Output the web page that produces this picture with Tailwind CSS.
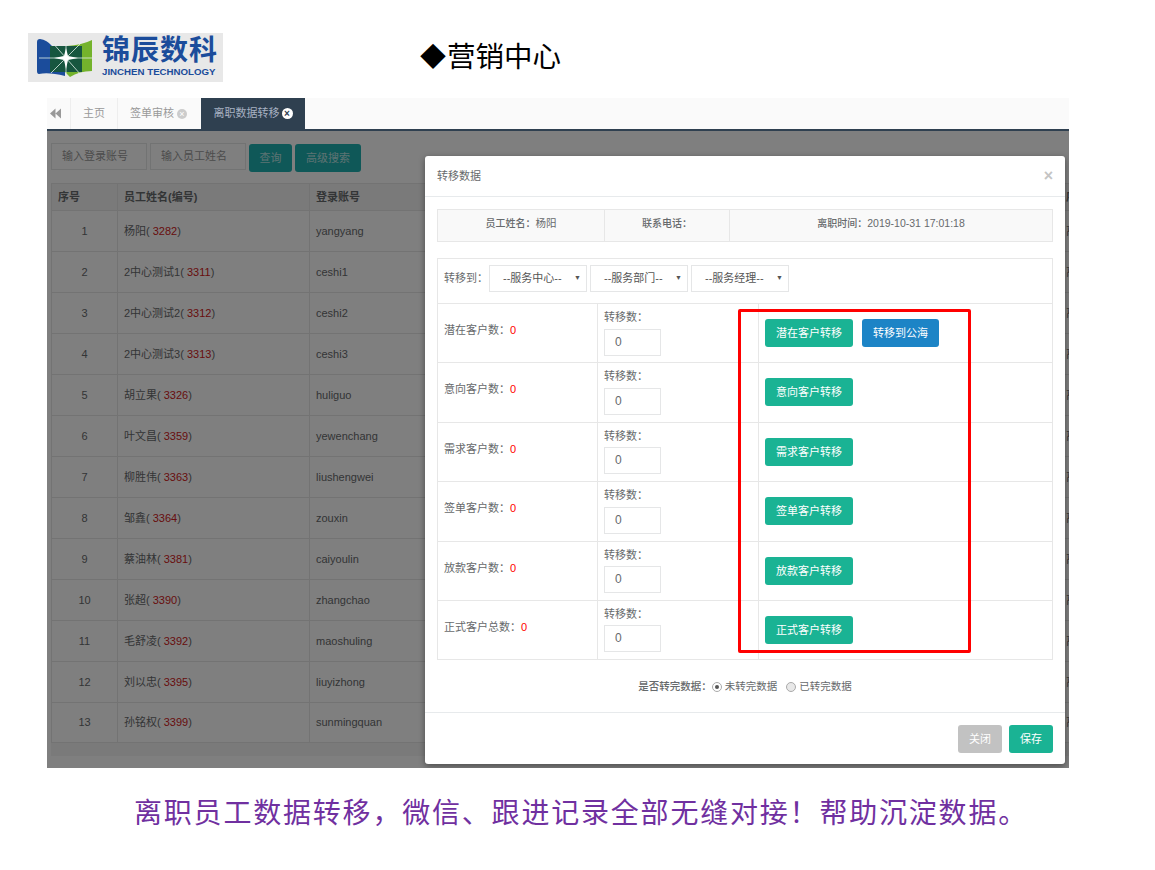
<!DOCTYPE html>
<html lang="zh-CN">
<head>
    <meta charset="UTF-8">
    <title>营销中心</title>
    <script src="https://cdn.jsdelivr.net/npm/@tailwindcss/browser@4"></script>
</head>
<body class="bg-white w-[1155px] h-[870px] overflow-hidden font-['Liberation_Sans','Noto_Sans_CJK_SC',sans-serif] text-[11px] text-[#676a6c]">
    <!-- Slide header -->
    <div class="flex h-[98px] pt-[33px] pl-[28px]">
        <div class="flex items-center w-[195px] h-[49px] bg-[#e8e8e8] pl-[9px]">
            <svg class="w-[55px] h-[38px] shrink-0" viewBox="0 0 55 38">
                <path d="M30 7 Q45 6 55 1 Q56 20 55 32 Q42 32 33 38 L28 33 Z" fill="#74b32c"/>
                <path d="M0 3 Q0 0 3 0 Q10 1 15 7 V32 H28 V37 Q12 33 2 35 Q0 35 0 32 Z" fill="#1b4c9b"/>
                <rect x="13" y="7" width="32" height="26" fill="#17563f"/>
                <path d="M14 2 L44 36 M44 4 L14 34 M29 3 V36 M2 19 H55" stroke="#dfeee6" stroke-width="0.8"/>
                <path d="M29 9 L31 17 L41 19 L31 21 L29 30 L27 21 L17 19 L27 17 Z" fill="#fff"/>
            </svg>
            <div class="ml-[10px] text-[#1b4c9b] font-bold">
                <div class="text-[28px] leading-[30px] tracking-[1px] -mt-[3px]">锦辰数科</div>
                <div class="text-[9.7px] leading-[11px] font-['Liberation_Sans',sans-serif]">JINCHEN TECHNOLOGY</div>
            </div>
        </div>
        <div class="ml-[197px] h-[48px] flex items-center text-[28.5px] text-black"><span class="w-[27px] text-[26px]">◆</span>营销中心</div>
    </div>

    <!-- App screenshot -->
    <div class="relative ml-[47px] w-[1022px] h-[670px] overflow-hidden bg-white">
        <!-- Tabs -->
        <div class="relative z-20 flex h-[33px] bg-[#fafafa] border-b-2 border-[#2f4050]">
            <div class="w-[23px] flex items-center pl-[3px]">
                <svg class="w-[11px] h-[11px]" viewBox="0 0 10 10" fill="#999"><path d="M5 0.5 V9.5 L0 5 Z M10 0.5 V9.5 L5 5 Z"/></svg>
            </div>
            <div class="w-[47px] flex items-center justify-center border-l border-[#eee] text-[#999]">主页</div>
            <div class="w-[84px] flex items-center justify-center gap-[3px] border-l border-[#eee] text-[#999] pr-[2px]">签单审核<span class="w-[10px] h-[10px] rounded-full bg-[#ccc] text-white text-[9px] leading-[10px] text-center">×</span></div>
            <div class="w-[104px] flex items-center justify-center gap-[2px] bg-[#2f4050] text-[#a7b1c2]">离职数据转移<span class="w-[11px] h-[11px] rounded-full bg-white text-[#2f4050] text-[10px] leading-[11px] text-center font-bold">×</span></div>
        </div>

        <!-- Page behind the dialog -->
        <div class="px-[4px] pt-[12px]">
            <div class="flex gap-[3px] h-[40px]">
                <div class="w-[96px] h-[27px] border border-[#e5e6e7] pl-[10px] leading-[25px] text-[#999]">输入登录账号</div>
                <div class="w-[96px] h-[27px] border border-[#e5e6e7] pl-[10px] leading-[25px] text-[#999]">输入员工姓名</div>
                <div class="w-[43px] h-[28px] mt-[1px] rounded-[3px] bg-[#1fb0b0] text-white/70 text-center leading-[28px]">查询</div>
                <div class="w-[66px] h-[28px] mt-[1px] rounded-[3px] bg-[#1fb0b0] text-white/70 text-center leading-[28px]">高级搜索</div>
            </div>
            <table class="w-[1100px] table-fixed border-collapse">
                <thead>
                    <tr class="h-[27px] bg-[#f5f5f5] font-bold text-left">
                        <th class="w-[66px] border border-[#e7e7e7] pl-[6px]">序号</th>
                        <th class="w-[192px] border border-[#e7e7e7] pl-[6px]">员工姓名(编号)</th>
                        <th class="w-[750px] border border-[#e7e7e7] pl-[6px]">登录账号</th>
                        <th class="border border-[#e7e7e7] pl-[6px]">序</th>
                    </tr>
                </thead>
                <tbody>
                    <tr class="h-[41px]"><td class="border border-[#e7e7e7] text-center">1</td><td class="border border-[#e7e7e7] pl-[6px]">杨阳( <span class="text-[#d02020]">3282</span>)</td><td class="border border-[#e7e7e7] pl-[6px]">yangyang</td><td class="border border-[#e7e7e7] pl-[6px]">离</td></tr>
                    <tr class="h-[41px]"><td class="border border-[#e7e7e7] text-center">2</td><td class="border border-[#e7e7e7] pl-[6px]">2中心测试1( <span class="text-[#d02020]">3311</span>)</td><td class="border border-[#e7e7e7] pl-[6px]">ceshi1</td><td class="border border-[#e7e7e7] pl-[6px]">离</td></tr>
                    <tr class="h-[41px]"><td class="border border-[#e7e7e7] text-center">3</td><td class="border border-[#e7e7e7] pl-[6px]">2中心测试2( <span class="text-[#d02020]">3312</span>)</td><td class="border border-[#e7e7e7] pl-[6px]">ceshi2</td><td class="border border-[#e7e7e7] pl-[6px]">离</td></tr>
                    <tr class="h-[41px]"><td class="border border-[#e7e7e7] text-center">4</td><td class="border border-[#e7e7e7] pl-[6px]">2中心测试3( <span class="text-[#d02020]">3313</span>)</td><td class="border border-[#e7e7e7] pl-[6px]">ceshi3</td><td class="border border-[#e7e7e7] pl-[6px]">离</td></tr>
                    <tr class="h-[41px]"><td class="border border-[#e7e7e7] text-center">5</td><td class="border border-[#e7e7e7] pl-[6px]">胡立果( <span class="text-[#d02020]">3326</span>)</td><td class="border border-[#e7e7e7] pl-[6px]">huliguo</td><td class="border border-[#e7e7e7] pl-[6px]">离</td></tr>
                    <tr class="h-[41px]"><td class="border border-[#e7e7e7] text-center">6</td><td class="border border-[#e7e7e7] pl-[6px]">叶文昌( <span class="text-[#d02020]">3359</span>)</td><td class="border border-[#e7e7e7] pl-[6px]">yewenchang</td><td class="border border-[#e7e7e7] pl-[6px]">离</td></tr>
                    <tr class="h-[41px]"><td class="border border-[#e7e7e7] text-center">7</td><td class="border border-[#e7e7e7] pl-[6px]">柳胜伟( <span class="text-[#d02020]">3363</span>)</td><td class="border border-[#e7e7e7] pl-[6px]">liushengwei</td><td class="border border-[#e7e7e7] pl-[6px]">离</td></tr>
                    <tr class="h-[41px]"><td class="border border-[#e7e7e7] text-center">8</td><td class="border border-[#e7e7e7] pl-[6px]">邹鑫( <span class="text-[#d02020]">3364</span>)</td><td class="border border-[#e7e7e7] pl-[6px]">zouxin</td><td class="border border-[#e7e7e7] pl-[6px]">离</td></tr>
                    <tr class="h-[41px]"><td class="border border-[#e7e7e7] text-center">9</td><td class="border border-[#e7e7e7] pl-[6px]">蔡油林( <span class="text-[#d02020]">3381</span>)</td><td class="border border-[#e7e7e7] pl-[6px]">caiyoulin</td><td class="border border-[#e7e7e7] pl-[6px]">离</td></tr>
                    <tr class="h-[41px]"><td class="border border-[#e7e7e7] text-center">10</td><td class="border border-[#e7e7e7] pl-[6px]">张超( <span class="text-[#d02020]">3390</span>)</td><td class="border border-[#e7e7e7] pl-[6px]">zhangchao</td><td class="border border-[#e7e7e7] pl-[6px]">离</td></tr>
                    <tr class="h-[41px]"><td class="border border-[#e7e7e7] text-center">11</td><td class="border border-[#e7e7e7] pl-[6px]">毛舒凌( <span class="text-[#d02020]">3392</span>)</td><td class="border border-[#e7e7e7] pl-[6px]">maoshuling</td><td class="border border-[#e7e7e7] pl-[6px]">离</td></tr>
                    <tr class="h-[41px]"><td class="border border-[#e7e7e7] text-center">12</td><td class="border border-[#e7e7e7] pl-[6px]">刘以忠( <span class="text-[#d02020]">3395</span>)</td><td class="border border-[#e7e7e7] pl-[6px]">liuyizhong</td><td class="border border-[#e7e7e7] pl-[6px]">离</td></tr>
                    <tr class="h-[40px]"><td class="border border-[#e7e7e7] text-center">13</td><td class="border border-[#e7e7e7] pl-[6px]">孙铭权( <span class="text-[#d02020]">3399</span>)</td><td class="border border-[#e7e7e7] pl-[6px]">sunmingquan</td><td class="border border-[#e7e7e7] pl-[6px]">离</td></tr>
                </tbody>
            </table>
            <div class="h-[13px] w-[1100px] bg-[#f5f5f5]"></div>
        </div>

        <!-- Backdrop -->
        <div class="absolute inset-0 z-10 bg-black/50"></div>

        <!-- Dialog -->
        <div class="absolute z-20 left-[378px] top-[58px] w-[640px] h-[608px] bg-white rounded-[3px] shadow-[0_2px_6px_rgba(0,0,0,0.4)] flex flex-col font-['Liberation_Sans','Noto_Sans_CJK_TC',sans-serif]">
            <div class="h-[41px] shrink-0 border-b border-[#e7eaec] flex items-center justify-between px-[12px]">
                <span>转移数据</span>
                <span class="text-[#c4c4c4] text-[16px] font-bold leading-none">×</span>
            </div>
            <div class="px-[12px] pt-[12px] flex-1">
                <div class="grid grid-cols-[167px_125px_1fr] h-[33px] bg-[#f9f9f9] border border-[#e7e7e7] text-center text-[10.5px] leading-[26px]">
                    <div class="border-r border-[#e7e7e7]"><b class="font-medium text-[10px]">员工姓名：</b>杨阳</div>
                    <div class="border-r border-[#e7e7e7]"><b class="font-medium text-[10px]">联系电话：</b></div>
                    <div><b class="font-medium text-[10px]">离职时间：</b>2019-10-31 17:01:18</div>
                </div>

                <div class="mt-[16px] border border-[#e7e7e7]">
                    <div class="h-[45px] flex items-start pt-[6px] pl-[6px] border-b border-[#e7e7e7]">
                        <span class="w-[45px] leading-[27px]">转移到：</span>
                        <span class="relative w-[98px] h-[27px] border border-[#e5e6e7] leading-[25px] pl-[13px] text-[#555]">--服务中心--<i class="absolute right-[5px] top-[8px] text-[7px] leading-none not-italic">▼</i></span>
                        <span class="relative w-[98px] h-[27px] border border-[#e5e6e7] leading-[25px] pl-[13px] ml-[3px] text-[#555]">--服务部门--<i class="absolute right-[5px] top-[8px] text-[7px] leading-none not-italic">▼</i></span>
                        <span class="relative w-[98px] h-[27px] border border-[#e5e6e7] leading-[25px] pl-[13px] ml-[3px] text-[#555]">--服务经理--<i class="absolute right-[5px] top-[8px] text-[7px] leading-none not-italic">▼</i></span>
                    </div>

                    <div class="h-[59.4px] grid grid-cols-[160px_161px_1fr] border-b border-[#e7e7e7]">
                        <div class="border-r border-[#e7e7e7] pl-[6px] pt-[18px]">潜在客户数：<span class="text-[#f00]">0</span></div>
                        <div class="border-r border-[#e7e7e7] pl-[6px] pt-[5px]">转移数：<div class="mt-[3px] w-[57px] h-[27px] border border-[#e5e6e7] pl-[10px] leading-[25px] text-[12px]">0</div></div>
                        <div class="pl-[6px] pt-[15px] flex gap-[9px] items-start">
                            <span class="w-[88px] h-[28px] rounded-[3px] bg-[#1ab394] text-white text-center leading-[28px]">潜在客户转移</span>
                            <span class="w-[77px] h-[28px] rounded-[3px] bg-[#1c84c6] text-white text-center leading-[28px]">转移到公海</span>
                        </div>
                    </div>
                    <div class="h-[59.4px] grid grid-cols-[160px_161px_1fr] border-b border-[#e7e7e7]">
                        <div class="border-r border-[#e7e7e7] pl-[6px] pt-[18px]">意向客户数：<span class="text-[#f00]">0</span></div>
                        <div class="border-r border-[#e7e7e7] pl-[6px] pt-[5px]">转移数：<div class="mt-[3px] w-[57px] h-[27px] border border-[#e5e6e7] pl-[10px] leading-[25px] text-[12px]">0</div></div>
                        <div class="pl-[6px] pt-[15px]"><span class="block w-[88px] h-[28px] rounded-[3px] bg-[#1ab394] text-white text-center leading-[28px]">意向客户转移</span></div>
                    </div>
                    <div class="h-[59.4px] grid grid-cols-[160px_161px_1fr] border-b border-[#e7e7e7]">
                        <div class="border-r border-[#e7e7e7] pl-[6px] pt-[18px]">需求客户数：<span class="text-[#f00]">0</span></div>
                        <div class="border-r border-[#e7e7e7] pl-[6px] pt-[5px]">转移数：<div class="mt-[3px] w-[57px] h-[27px] border border-[#e5e6e7] pl-[10px] leading-[25px] text-[12px]">0</div></div>
                        <div class="pl-[6px] pt-[15px]"><span class="block w-[88px] h-[28px] rounded-[3px] bg-[#1ab394] text-white text-center leading-[28px]">需求客户转移</span></div>
                    </div>
                    <div class="h-[59.4px] grid grid-cols-[160px_161px_1fr] border-b border-[#e7e7e7]">
                        <div class="border-r border-[#e7e7e7] pl-[6px] pt-[18px]">签单客户数：<span class="text-[#f00]">0</span></div>
                        <div class="border-r border-[#e7e7e7] pl-[6px] pt-[5px]">转移数：<div class="mt-[3px] w-[57px] h-[27px] border border-[#e5e6e7] pl-[10px] leading-[25px] text-[12px]">0</div></div>
                        <div class="pl-[6px] pt-[15px]"><span class="block w-[88px] h-[28px] rounded-[3px] bg-[#1ab394] text-white text-center leading-[28px]">签单客户转移</span></div>
                    </div>
                    <div class="h-[59.4px] grid grid-cols-[160px_161px_1fr] border-b border-[#e7e7e7]">
                        <div class="border-r border-[#e7e7e7] pl-[6px] pt-[18px]">放款客户数：<span class="text-[#f00]">0</span></div>
                        <div class="border-r border-[#e7e7e7] pl-[6px] pt-[5px]">转移数：<div class="mt-[3px] w-[57px] h-[27px] border border-[#e5e6e7] pl-[10px] leading-[25px] text-[12px]">0</div></div>
                        <div class="pl-[6px] pt-[15px]"><span class="block w-[88px] h-[28px] rounded-[3px] bg-[#1ab394] text-white text-center leading-[28px]">放款客户转移</span></div>
                    </div>
                    <div class="h-[58px] grid grid-cols-[160px_161px_1fr]">
                        <div class="border-r border-[#e7e7e7] pl-[6px] pt-[18px]">正式客户总数：<span class="text-[#f00]">0</span></div>
                        <div class="border-r border-[#e7e7e7] pl-[6px] pt-[5px]">转移数：<div class="mt-[3px] w-[57px] h-[27px] border border-[#e5e6e7] pl-[10px] leading-[25px] text-[12px]">0</div></div>
                        <div class="pl-[6px] pt-[15px]"><span class="block w-[88px] h-[28px] rounded-[3px] bg-[#1ab394] text-white text-center leading-[28px]">正式客户转移</span></div>
                    </div>
                </div>

                <div class="mt-[19px] flex items-center justify-center h-[16px] text-[10.5px]">
                    <span class="font-medium">是否转完数据：</span>
                    <span class="w-[10px] h-[10px] rounded-full border border-[#aaa] bg-white flex items-center justify-center mr-[3px]"><i class="block w-[4px] h-[4px] rounded-full bg-[#555]"></i></span>
                    <span class="mr-[9px]">未转完数据</span>
                    <span class="w-[10px] h-[10px] rounded-full border border-[#aaa] bg-[#e8e8e8] mr-[3px]"></span>
                    <span>已转完数据</span>
                </div>
            </div>
            <div class="h-[52px] shrink-0 border-t border-[#e7eaec] flex items-center justify-end gap-[7px] px-[12px]">
                <span class="w-[44px] h-[28px] rounded-[3px] bg-[#c2c2c2] text-white text-center leading-[28px]">关闭</span>
                <span class="w-[44px] h-[28px] rounded-[3px] bg-[#1ab394] text-white text-center leading-[28px]">保存</span>
            </div>
        </div>

        <!-- Red highlight drawn on the slide -->
        <div class="absolute z-30 left-[691px] top-[211px] w-[233px] h-[344px] border-[3px] border-[#f00] rounded-[2px]"></div>
    </div>

    <!-- Caption -->
    <p class="ml-[134px] mt-[27px] text-[28px] leading-[38px] tracking-[1.8px] whitespace-nowrap text-[#7030a0]">离职员工数据转移，微信、跟进记录全部无缝对接！帮助沉淀数据。</p>
</body>
</html>
